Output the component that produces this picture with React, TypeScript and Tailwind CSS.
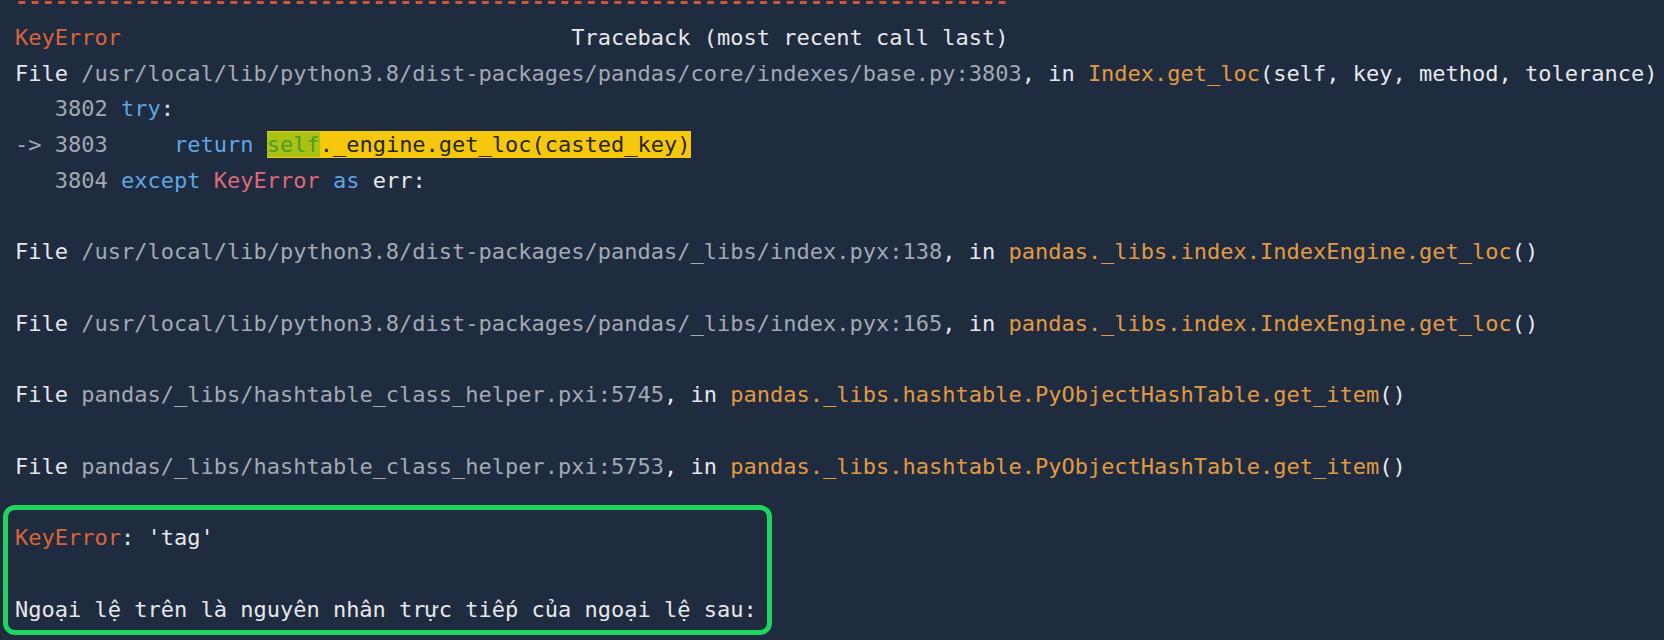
type Seg = [string, string];

const W = 'text-[#e6e8eb]';
const GRAY = 'text-[#a2a9b4]';
const ORANGE = 'text-[#e29a42]';
const RED = 'text-[#d9653c]';
const BLUE = 'text-[#5ea6e4]';
const PINK = 'text-[#dc6a7a]';

const fileLine = (path: string, fn: string, args: string): Seg[] => [
  ['File ', W],
  [path, GRAY],
  [', in ', W],
  [fn, ORANGE],
  [args, W],
];

const lines: (Seg[] | null)[] = [
  [['-'.repeat(75), 'text-[#c9583c] font-bold']],
  [
    ['KeyError', RED],
    [' '.repeat(34) + 'Traceback (most recent call last)', W],
  ],
  fileLine(
    '/usr/local/lib/python3.8/dist-packages/pandas/core/indexes/base.py:3803',
    'Index.get_loc',
    '(self, key, method, tolerance)'
  ),
  [
    ['   3802 ', GRAY],
    ['try', BLUE],
    [':', W],
  ],
  null, // highlighted line rendered separately
  [
    ['   3804 ', GRAY],
    ['except ', BLUE],
    ['KeyError', PINK],
    [' as ', BLUE],
    ['err:', W],
  ],
  [],
  fileLine('/usr/local/lib/python3.8/dist-packages/pandas/_libs/index.pyx:138', 'pandas._libs.index.IndexEngine.get_loc', '()'),
  [],
  fileLine('/usr/local/lib/python3.8/dist-packages/pandas/_libs/index.pyx:165', 'pandas._libs.index.IndexEngine.get_loc', '()'),
  [],
  fileLine('pandas/_libs/hashtable_class_helper.pxi:5745', 'pandas._libs.hashtable.PyObjectHashTable.get_item', '()'),
  [],
  fileLine('pandas/_libs/hashtable_class_helper.pxi:5753', 'pandas._libs.hashtable.PyObjectHashTable.get_item', '()'),
];

function Line({ segs }: { segs: Seg[] }) {
  return (
    <div className="h-[35.75px] leading-[35.75px] whitespace-pre">
      {segs.map(([t, c], i) => (
        <span key={i} className={c}>
          {t}
        </span>
      ))}
    </div>
  );
}

export default function App() {
  return (
    <div className="w-[1664px] h-[640px] overflow-hidden bg-[#1f2b3e] font-['DejaVu_Sans_Mono','Liberation_Mono',monospace] text-[22px]">
      <div className="-mt-[16px] pl-[15px]">
        {lines.map((segs, i) =>
          segs ? (
            <Line key={i} segs={segs} />
          ) : (
            <div key={i} className="h-[35.75px] leading-[35.75px] whitespace-pre">
              <span className={GRAY}>-&gt; 3803     </span>
              <span className={BLUE}>return </span>
              <span className="inline-block leading-[27px] bg-[#f5c80d] text-[#2b2716]">
                <span className="bg-[#a9c213] text-[#4f9d24]">self</span>._engine.get_loc(casted_key)
              </span>
            </div>
          )
        )}
      </div>

      {/* annotation box */}
      <div className="mt-[20.5px] ml-[3px] w-[769px] h-[130px] border-[5px] border-[#1fd55e] rounded-[12px] pl-[7px] pt-[10.25px]">
        <Line segs={[['KeyError', RED], [": 'tag'", W]]} />
        <Line segs={[]} />
        <Line segs={[['Ngoại lệ trên là nguyên nhân trực tiếp của ngoại lệ sau:', W]]} />
      </div>
    </div>
  );
}
